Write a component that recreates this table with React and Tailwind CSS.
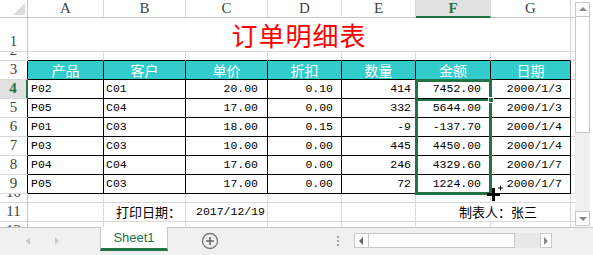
import React from 'react';

const cols = ['A', 'B', 'C', 'D', 'E', 'F', 'G'];
const heads = ['产品', '客户', '单价', '折扣', '数量', '金额', '日期'];
const data = [
	['P02', 'C01', '20.00', '0.10', '414', '7452.00', '2000/1/3'],
	['P05', 'C04', '17.00', '0.00', '332', '5644.00', '2000/1/3'],
	['P01', 'C03', '18.00', '0.15', '-9', '-137.70', '2000/1/4'],
	['P03', 'C03', '10.00', '0.00', '445', '4450.00', '2000/1/4'],
	['P04', 'C04', '17.60', '0.00', '246', '4329.60', '2000/1/7'],
	['P05', 'C03', '17.00', '0.00', '72', '1224.00', '2000/1/7'],
];
// per column alignment, numbers keep excel's trailing space
const align = [
	'justify-start pl-[3px]',
	'justify-start pl-[2px]',
	'justify-end pr-[9px]',
	'justify-end pr-[8px]',
	'justify-end pr-[4px]',
	'justify-end pr-[9px]',
	'justify-end pr-[8px]',
];

const grey = 'border-r border-b border-[#d9d9d9]';
const mono = "font-['Liberation_Mono','Noto_Sans_CJK_SC',monospace] text-[11.5px] text-black";
const cjk = "font-['Noto_Sans_CJK_SC',sans-serif]";

function RowLabel({n, active, black}) {
	let cls = 'flex items-end justify-center overflow-hidden border-b border-[#d9d9d9] bg-white text-[#444] ';
	if (active) cls = 'flex items-end justify-center overflow-hidden border-b border-[#d9d9d9] bg-[#e1e1e1] text-[#217346] font-bold border-r-2 border-r-[#217346] ';
	else if (black) cls += 'border-r border-r-black ';
	else cls += 'border-r border-r-[#c6c6c6] ';
	return (
		<div className={cls + "font-['Liberation_Serif',serif] text-[15px]"}>
			<span className="leading-[17px] pb-[1px]">{n}</span>
		</div>
	);
}

function PlainRow({n}) {
	return (
		<>
			<RowLabel n={n} />
			{cols.map(c => <div key={c} className={grey}></div>)}
			<div className="border-b border-[#d9d9d9]"></div>
		</>
	);
}

function Tri({dir, color}) {
	const pts = {
		up: '1,6 5,2 9,6',
		down: '1,3 5,7 9,3',
		left: '6,1 2,5 6,9',
		right: '3,1 7,5 3,9',
	}[dir];
	return (
		<svg width="10" height="10" viewBox="0 0 10 10">
			<polygon points={pts} fill={color} />
		</svg>
	);
}

function Sheet() {
	return (
		<div className="relative w-[575px] h-[227px] overflow-hidden bg-white">
			<div className="grid grid-cols-[28px_76px_82px_82px_74px_74px_75px_80px_4px] grid-rows-[18px_34px_9px_19px_19px_19px_19px_19px_19px_19px_9px_19px_19px]">
				{/* column headers */}
				<div className="relative border-r border-b border-[#c6c6c6] bg-white">
					<svg className="absolute right-[2px] bottom-[2px]" width="12" height="12" viewBox="0 0 12 12">
						<polygon points="12,0 12,12 0,12" fill="#dcdcdc" />
					</svg>
				</div>
				{cols.map(c => (
					c === 'F'
						? <div key={c} className="flex items-center justify-center border-r border-[#d9d9d9] border-b-2 border-b-[#217346] bg-[#e1e1e1] text-[#217346] font-bold font-['Liberation_Serif',serif] text-[15px]">{c}</div>
						: <div key={c} className="flex items-center justify-center border-r border-[#d9d9d9] border-b border-b-[#c6c6c6] bg-white text-[#444] font-['Liberation_Serif',serif] text-[15px]">{c}</div>
				))}
				<div className="border-b border-[#c6c6c6]"></div>

				{/* row 1 title */}
				<RowLabel n="1" />
				<div className={'col-span-7 flex items-center justify-center ' + grey}>
					<span className={cjk + ' text-[26px] text-[#ff0000] leading-none tracking-[1px]'}>订单明细表</span>
				</div>
				<div className="border-b border-[#d9d9d9]"></div>

				{/* row 2 */}
				<RowLabel n="2" />
				{cols.map(c => <div key={c} className="border-r border-[#d9d9d9] border-b border-b-black"></div>)}
				<div className="border-b border-[#d9d9d9]"></div>

				{/* row 3 heads */}
				<RowLabel n="3" black />
				{heads.map(h => (
					<div key={h} className={'flex items-center justify-center border-r border-b border-black bg-[#33cccc] text-white text-[14px] ' + cjk}>{h}</div>
				))}
				<div className="border-b border-[#d9d9d9]"></div>

				{data.map((r, i) => (
					<React.Fragment key={i}>
						<RowLabel n={i + 4} active={i === 0} black />
						{r.map((v, j) => (
							<div key={j} className={'flex items-center border-r border-b border-black overflow-hidden whitespace-nowrap ' + align[j] + ' ' + mono}>{v}</div>
						))}
						<div className="border-b border-[#d9d9d9]"></div>
					</React.Fragment>
				))}

				<PlainRow n="10" />

				{/* row 11 */}
				<RowLabel n="11" />
				<div className={grey}></div>
				<div className={'flex items-center justify-end pr-[4px] text-[13px] text-black ' + cjk + ' ' + grey}>打印日期：</div>
				<div className={'flex items-center justify-end pr-[2px] ' + mono + ' ' + grey}>2017/12/19</div>
				<div className={grey}></div>
				<div className={grey}></div>
				<div className={'col-span-2 flex items-center justify-center pl-[10px] text-[13px] text-black ' + cjk + ' ' + grey}>制表人：张三</div>
				<div className="border-b border-[#d9d9d9]"></div>

				<PlainRow n="12" />
			</div>

			{/* selection of F4:F9 */}
			<div className="absolute left-[415px] top-[79px] w-[77px] h-[116px] border-[3px] border-[#217346]"></div>
			<div className="absolute left-[415px] top-[99px] w-[77px] h-[2px] bg-[#217346]"></div>
			<div className="absolute left-[488px] top-[97px] w-[6px] h-[6px] bg-[#217346] border border-white"></div>
			<svg className="absolute left-[486px] top-[185px]" width="18" height="18" viewBox="0 0 18 18">
				<rect x="1" y="8" width="13" height="3" fill="#000" />
				<rect x="6" y="3" width="3" height="13" fill="#000" />
				<rect x="12" y="2.5" width="5" height="1" fill="#000" />
				<rect x="14" y="0.5" width="1" height="5" fill="#000" />
			</svg>
		</div>
	);
}

function VScroll() {
	return (
		<div className="flex flex-col w-[15px] h-[227px] pt-[2px] bg-white">
			<div className="h-[15px] flex items-center justify-center border border-[#c8c8c8] bg-white">
				<Tri dir="up" color="#888" />
			</div>
			<div className="h-[116px] border-x border-b border-[#c8c8c8] bg-white"></div>
			<div className="flex-1 bg-[#f0f0f0]"></div>
			<div className="h-[15px] mb-[1px] flex items-center justify-center border border-[#c8c8c8] bg-white">
				<Tri dir="down" color="#888" />
			</div>
		</div>
	);
}

function TabBar() {
	return (
		<div className="flex h-[28px] bg-[#f0f0f0] border-t border-[#c6c6c6]">
			<div className="w-[100px] flex items-center pl-[24px] gap-[18px] pb-[2px]">
				<Tri dir="left" color="#c8c8c8" />
				<Tri dir="right" color="#c8c8c8" />
			</div>
			<div className="w-[68px] h-[24px] flex items-center justify-center bg-white border-x border-[#c6c6c6] border-b-[3px] border-b-[#217346] -mt-[1px] text-[13px] text-[#217346] font-['Liberation_Sans',sans-serif]">
				Sheet1
			</div>
			<div className="w-[84px] flex items-center justify-center pb-[2px]">
				<svg width="18" height="18" viewBox="0 0 18 18">
					<circle cx="9" cy="9" r="7.5" fill="none" stroke="#777" strokeWidth="1.3" />
					<path d="M9 5v8M5 9h8" stroke="#666" strokeWidth="1.6" />
				</svg>
			</div>
			<div className="w-[102px] flex items-center justify-end pr-[15px] pb-[2px]">
				<div className="flex flex-col gap-[2px]">
					<div className="w-[2px] h-[2px] bg-[#a0a0a0]"></div>
					<div className="w-[2px] h-[2px] bg-[#a0a0a0]"></div>
					<div className="w-[2px] h-[2px] bg-[#a0a0a0]"></div>
				</div>
			</div>
			<div className="w-[198px] h-[15px] mt-[5px] flex bg-[#e8e8e8]">
				<div className="w-[15px] flex items-center justify-center border border-[#c8c8c8] bg-white">
					<Tri dir="left" color="#666" />
				</div>
				<div className="w-[146px] border-y border-r border-[#c8c8c8] bg-white"></div>
				<div className="flex-1"></div>
				<div className="w-[12px] flex items-center justify-center border border-[#c8c8c8] bg-white">
					<Tri dir="right" color="#888" />
				</div>
			</div>
		</div>
	);
}

export default function App() {
	return (
		<div className="w-[593px] h-[255px] overflow-hidden bg-white">
			<div className="flex">
				<Sheet />
				<VScroll />
				<div className="w-[3px] bg-white"></div>
			</div>
			<TabBar />
		</div>
	);
}
